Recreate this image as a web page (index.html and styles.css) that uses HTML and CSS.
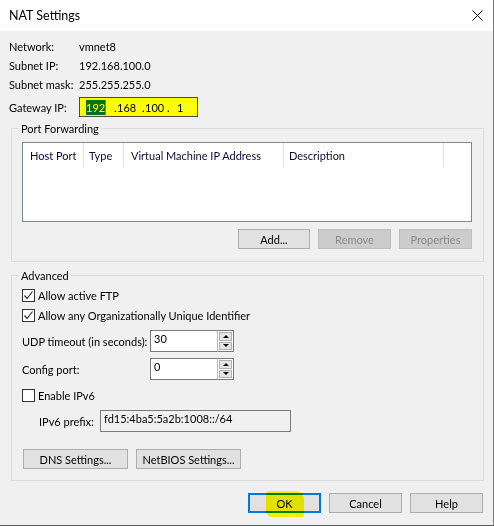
FILE: index.html
```html
<!DOCTYPE html>
<html lang="en">
	<head>
		<meta charset="UTF-8" />
		<title>NAT Settings</title>
		<link rel="stylesheet" href="styles.css">
	</head>
	<body>
		<div class="dialog">
			<div class="titlebar">
				<span class="title">NAT Settings</span>
				<svg class="close" width="11" height="11" viewBox="0 0 11 11">
					<path d="M0.5 0.5 L10.5 10.5 M10.5 0.5 L0.5 10.5" stroke="#000" stroke-width="1" fill="none" />
				</svg>
			</div>
			<div class="content">
				<div class="info">
					<div class="info-row"><span class="info-label">Network:</span><span>vmnet8</span></div>
					<div class="info-row"><span class="info-label">Subnet IP:</span><span>192.168.100.0</span></div>
					<div class="info-row"><span class="info-label">Subnet mask:</span><span>255.255.255.0</span></div>
					<div class="info-row gateway-row">
						<span class="info-label">Gateway IP:</span>
						<div class="ip-box">
							<span class="octet sel">192</span><span class="caret"></span>
							<span class="dot">.</span><span class="octet">168</span>
							<span class="dot">.</span><span class="octet">100</span>
							<span class="dot dot-last">.</span><span class="octet last">1</span>
						</div>
					</div>
				</div>

				<div class="group port-group">
					<div class="group-title">Port Forwarding</div>
					<div class="list">
						<div class="list-head">
							<div class="col col-host">Host Port</div>
							<div class="col col-type">Type</div>
							<div class="col col-ip">Virtual Machine IP Address</div>
							<div class="col col-desc">Description</div>
						</div>
					</div>
					<div class="btn-row">
						<button class="btn">Add...</button>
						<button class="btn" disabled>Remove</button>
						<button class="btn" disabled>Properties</button>
					</div>
				</div>

				<div class="group adv-group">
					<div class="group-title">Advanced</div>
					<div class="check-row first">
						<span class="checkbox checked">
							<svg width="11" height="11" viewBox="0 0 11 11"><path d="M1.5 5.5 L4 8.5 L9.5 1.5" stroke="#333" stroke-width="1.2" fill="none" /></svg>
						</span>
						<span>Allow active FTP</span>
					</div>
					<div class="check-row">
						<span class="checkbox checked">
							<svg width="11" height="11" viewBox="0 0 11 11"><path d="M1.5 5.5 L4 8.5 L9.5 1.5" stroke="#333" stroke-width="1.2" fill="none" /></svg>
						</span>
						<span>Allow any Organizationally Unique Identifier</span>
					</div>
					<div class="field-row">
						<span class="field-label">UDP timeout (in seconds):</span>
						<div class="spin">
							<div class="spin-input">30</div>
							<div class="spin-btns">
								<span class="spin-btn"><span class="arrow-up"></span></span>
								<span class="spin-btn"><span class="arrow-down"></span></span>
							</div>
						</div>
					</div>
					<div class="field-row">
						<span class="field-label">Config port:</span>
						<div class="spin">
							<div class="spin-input">0</div>
							<div class="spin-btns">
								<span class="spin-btn"><span class="arrow-up"></span></span>
								<span class="spin-btn"><span class="arrow-down"></span></span>
							</div>
						</div>
					</div>
					<div class="check-row ipv6-row">
						<span class="checkbox"></span>
						<span>Enable IPv6</span>
					</div>
					<div class="field-row prefix-row">
						<span class="prefix-label">IPv6 prefix:</span>
						<div class="prefix-input">fd15:4ba5:5a2b:1008::/64</div>
					</div>
					<div class="adv-btns">
						<button class="btn wide">DNS Settings...</button>
						<button class="btn wide">NetBIOS Settings...</button>
					</div>
				</div>

				<div class="footer">
					<button class="btn default">OK<span class="marker"></span></button>
					<button class="btn">Cancel</button>
					<button class="btn">Help</button>
				</div>
			</div>
		</div>
	</body>
</html>
```

FILE: styles.css
```css
body {
	margin: 0;
	background-color: #f0f0f0;
	font-family: Lato, "Noto Sans", sans-serif;
	font-size: 11px;
	color: #000;
	white-space: nowrap;
}
.dialog {
	width: 493px;
	height: 525px;
	border-right: 1px solid #7a7a7a;
	border-bottom: 1px solid #5a5a5a;
	background-color: #f0f0f0;
	overflow: hidden;
}
.titlebar {
	height: 31px;
	background-color: #fff;
	display: flex;
	align-items: center;
	justify-content: space-between;
	padding: 0 10px 0 9px;
}
.title {
	font-size: 12.5px;
	margin-top: -1px;
}
.close {
	margin-top: -1px;
}
.content {
	padding-top: 6px;
}

/* верхній блок з адресами */
.info {
	padding-left: 9px;
}
.info-row {
	height: 19px;
	display: flex;
	align-items: center;
}
.info-label {
	width: 70px;
	flex-shrink: 0;
}
.gateway-row {
	height: 20px;
	margin-top: 3px;
}
.ip-box {
	width: 119px;
	height: 20px;
	border: 1px solid #4a4a4a;
	background-color: #ffff00;
	display: flex;
	align-items: center;
	padding-left: 6px;
	box-sizing: border-box;
}
.ip-box span {
	flex-shrink: 0;
}
.octet {
	width: 17px;
}
.sel {
	width: 19px;
	background-color: #0f6e12;
	color: #ffff00;
	height: 15px;
	line-height: 15px;
	text-align: center;
}
.caret {
	width: 1px;
	height: 15px;
	background-color: #e46000;
}
.dot {
	width: 3px;
	margin-left: 8px;
}
.dot-last {
	margin-left: 5px;
}
.octet.last {
	margin-left: 7px;
}

/* групи */
.group {
	width: 473px;
	margin-left: 11px;
	border: 1px solid #dcdcdc;
	box-sizing: border-box;
	padding: 0 11px 0 10px;
}
.group-title {
	width: fit-content;
	height: 13px;
	line-height: 13px;
	margin: -7px 0 0 -3px;
	padding: 0 2px;
	background-color: #f0f0f0;
}
.port-group {
	margin-top: 11px;
	padding-bottom: 12px;
}
.list {
	height: 80px;
	border: 1px solid #828790;
	background-color: #fff;
	margin-top: 7px;
	box-sizing: border-box;
}
.list-head {
	display: flex;
	height: 24px;
}
.col {
	border-right: 1px solid #e5e5e5;
	padding-left: 7px;
	display: flex;
	align-items: center;
	color: #0a0a3a;
	box-sizing: border-box;
	flex-shrink: 0;
}
.col-host { width: 61px; }
.col-type { width: 40px; padding-left: 5px; }
.col-ip { width: 160px; }
.col-desc { width: 160px; padding-left: 5px; }

.btn {
	font-family: inherit;
	font-size: inherit;
	color: #000;
	background-color: #e1e1e1;
	border: 1px solid #adadad;
	height: 20px;
	width: 73px;
	padding: 0;
	margin: 0;
	display: block;
	flex-shrink: 0;
}
.btn:disabled {
	background-color: #cccccc;
	border-color: #bfbfbf;
	color: #8a8a8a;
}
.btn-row {
	display: flex;
	justify-content: flex-end;
	gap: 8px;
	margin-top: 7px;
}
.btn-row .btn:nth-child(1) { width: 72px; }

.adv-group {
	margin-top: 13px;
	padding-bottom: 11px;
}
.check-row {
	height: 18px;
	display: flex;
	align-items: center;
	margin-top: 2px;
}
.check-row.first {
	margin-top: 4px;
}
.checkbox {
	width: 13px;
	height: 13px;
	border: 1px solid #333;
	background-color: #fff;
	box-sizing: border-box;
	margin-right: 3px;
	display: flex;
	align-items: center;
	justify-content: center;
	flex-shrink: 0;
}
.field-row {
	display: flex;
	align-items: center;
	height: 22px;
	margin-top: 6px;
}
.field-label {
	width: 128px;
	flex-shrink: 0;
}
.spin {
	display: flex;
	height: 22px;
}
.spin-input {
	width: 67px;
	border: 1px solid #7a7a7a;
	border-right: none;
	background-color: #fff;
	box-sizing: border-box;
	padding: 1px 0 0 3px;
	line-height: 14px;
}
.spin-btns {
	width: 17px;
	border: 1px solid #7a7a7a;
	border-left: 1px solid #bdbdbd;
	background-color: #fff;
	box-sizing: border-box;
	display: flex;
	flex-direction: column;
	padding: 1px;
	gap: 1px;
}
.spin-btn {
	flex: 1;
	background-color: #e5e5e5;
	border: 1px solid #b0b0b0;
	display: flex;
	align-items: center;
	justify-content: center;
}
.arrow-up {
	width: 0;
	height: 0;
	border-left: 3px solid transparent;
	border-right: 3px solid transparent;
	border-bottom: 3px solid #000;
}
.arrow-down {
	width: 0;
	height: 0;
	border-left: 3px solid transparent;
	border-right: 3px solid transparent;
	border-top: 3px solid #000;
}
.ipv6-row {
	margin-top: 6px;
}
.prefix-row {
	padding-left: 17px;
}
.prefix-label {
	width: 61px;
	flex-shrink: 0;
}
.prefix-input {
	width: 191px;
	height: 22px;
	border: 1px solid #7a7a7a;
	box-sizing: border-box;
	padding: 1px 0 0 3px;
	line-height: 14px;
}
.adv-btns {
	display: flex;
	gap: 8px;
	margin-top: 17px;
	padding-left: 1px;
}
.btn.wide {
	width: 105px;
}

.footer {
	display: flex;
	justify-content: flex-end;
	gap: 8px;
	margin-top: 12px;
	padding-right: 10px;
}
.btn.default {
	border: 2px solid #0078d7;
	position: relative;
}
/* жовтий маркер поверх кнопки */
.marker {
	position: absolute;
	left: 16px;
	top: -4px;
	width: 38px;
	height: 26px;
	background-color: #ffff00;
	mix-blend-mode: multiply;
	border-radius: 3px 8px 2px 6px;
}
```
